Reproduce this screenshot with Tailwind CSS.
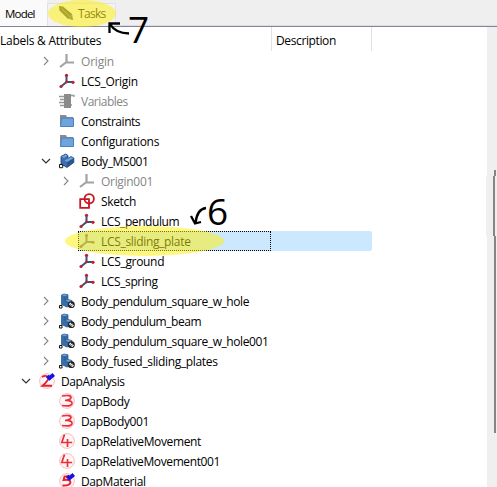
<!DOCTYPE html>
<html lang="en">
<head>
<meta charset="utf-8">
<title>Model tree</title>
<script src="https://cdn.jsdelivr.net/npm/@tailwindcss/browser@4"></script>
</head>
<body class="relative w-[497px] h-[487px] overflow-hidden bg-white font-['Open_Sans','Noto_Sans',sans-serif] text-[12px] leading-[20px] text-black whitespace-nowrap">
<svg class="hidden">
  <symbol id="lcs" viewBox="0 0 16 16"><path d="M7.500 2V9L2 13.500M7.500 9H14" fill="none" stroke="#35557f" stroke-width="2"/><g fill="#c4202b"><circle cx="7.500" cy="2.300" r="1.600"/><circle cx="2" cy="13.500" r="1.600"/><circle cx="14" cy="9.300" r="1.600"/><circle cx="7.600" cy="8.900" r="1.400"/></g></symbol>
  <symbol id="lcsdim" viewBox="0 0 16 16"><path d="M7.500 2V9L2 13.500M7.500 9H14" fill="none" stroke="#6f7a84" stroke-width="2"/><g fill="#8d6468"><circle cx="7.500" cy="2.300" r="1.500"/><circle cx="2" cy="13.500" r="1.500"/><circle cx="14" cy="9.300" r="1.500"/></g></symbol>
  <symbol id="origin" viewBox="0 0 16 16"><path d="M7.500 1V9L1 14M7.500 9.500H15" fill="none" stroke="#a2a2a2" stroke-width="2.200"/></symbol>
  <symbol id="vars" viewBox="0 0 16 16"><path d="M0 3.500H5M1 6.500H5M0 9.500H5M1 12.500H5M11 2.500H15V4M11 12H13" fill="none" stroke="#999" stroke-width="1.300"/><path d="M5 1H12V15H5Z" fill="#8b8b8b"/></symbol>
  <symbol id="folder" viewBox="0 0 16 16"><path d="M1 2H7L8 4H14V13H1Z" fill="#8c8c8c"/><path d="M2.500 5H14.500V13.500H1.500Z" fill="#6fa3dc" stroke="#4980c0"/></symbol>
  <symbol id="body" viewBox="0 0 16 16"><path d="M2 3.500L6.500 1L9 2.500V5.500L12 3.500L14.800 5V9.500L8 14.500L2 11Z" fill="#3a6eac" stroke="#1c3f6c" stroke-width=".8"/><path d="M8 9L14.600 5.200V9.400L8 14Z" fill="#28568f"/><path d="M2.500 3.700L6.500 1.500L8.600 2.800L5 5ZM5.500 7.500L12 4L14.400 5.200L8 9Z" fill="#6ea2da"/><path d="M.5 11.500H3.700V14.700H.5Z" fill="#fff" stroke="#111"/></symbol>
  <symbol id="link" viewBox="0 0 16 16"><path d="M2.500 2L5 1L9 1.800V6.500L13 7.500V13L8 14L2.500 11.500Z" fill="#396ca8" stroke="#24507f" stroke-width=".7"/><path d="M2.600 2.200L5 1.200L8.800 2L6 3.200ZM6 8L9 6.800L12.800 7.800L10 9.200Z" fill="#6b9fd6"/><path d="M6 3.500V8L9 9.300V13" fill="none" stroke="#24507f" stroke-width=".6"/><path d="M.5 12.500H3V15H.5Z" fill="#fff" stroke="#111"/><circle cx="12.400" cy="11.700" r="3.400" fill="#222"/><path d="M10.300 11.500L12 10M12.700 13.800L14.500 12M11.500 12.500L13.500 10.800" stroke="#fff" stroke-width="1.100"/></symbol>
  <symbol id="sketch" viewBox="0 0 16 16"><path d="M1.200 6.200H10V14.800H1.200Z" fill="none" stroke="#c81922" stroke-width="1.800"/><circle cx="10.200" cy="5.800" r="4.700" fill="none" stroke="#c81922" stroke-width="1.800"/></symbol>
  <symbol id="ring" viewBox="0 0 16 16"><circle cx="8" cy="8" r="7.400" fill="#fff5f5" stroke="#f7b5b8" stroke-width=".9"/></symbol>
  <symbol id="check" viewBox="0 0 16 16"><path d="M8.300 3L10.500 5.200L14.800 1.500" fill="none" stroke="#1212e8" stroke-width="3.800"/></symbol>
  <symbol id="d2" viewBox="0 0 16 16"><use href="#ring"/><path d="M3 4Q7 1.500 9.500 4.500Q10 7 3.500 12.800H13" fill="none" stroke="#e8202c" stroke-width="1.900"/><use href="#check"/></symbol>
  <symbol id="d3" viewBox="0 0 16 16"><use href="#ring"/><path d="M3 3Q12 1.500 12 4.500Q11.500 7.200 6 7.500Q13.500 7.200 13 10.500Q12.300 14 3 12.500" fill="none" stroke="#e8303b" stroke-width="1.700"/></symbol>
  <symbol id="d4" viewBox="0 0 16 16"><use href="#ring"/><path d="M5.500 1.500L2.800 9.500H13.200M8.500 6V14" fill="none" stroke="#e8303b" stroke-width="1.700"/></symbol>
  <symbol id="d5" viewBox="0 0 16 16"><use href="#ring"/><path d="M10 3L5.500 3.500L4.500 7Q11.500 6 11.500 9.500Q10.500 13 3.500 12.500" fill="none" stroke="#e8202c" stroke-width="1.900"/><use href="#check"/></symbol>
  <symbol id="right" viewBox="0 0 10 10"><path d="M3 1L7 5L3 9" fill="none" stroke="#858585" stroke-width="1.100"/></symbol>
  <symbol id="down" viewBox="0 0 10 10"><path d="M1 3L5 7L9 3" fill="none" stroke="#333" stroke-width="1.200"/></symbol>
</svg>

<header class="flex h-[27px] bg-[#efefef] border-b border-[#85839a]">
  <div class="w-[47px] bg-[#fafafa] pl-[5px] pt-[4px]"><span class="text-[11.5px] tracking-[-0.8px]">Model</span></div>
  <div class="mt-[3px] flex w-[69px] border border-b-0 border-[#e2e2e2] bg-[#f2f2f2] pl-[10px]">
    <svg class="mt-[1px] size-4" viewBox="0 0 16 16"><path d="M1 1L5 1.500L14 9L15 15L9.500 13.500L1.500 5.500Z" fill="#5c5c55"/><path d="M4 4L12 11.500M11 14L14 10" stroke="#a5a59c" stroke-width=".8"/></svg>
    <span class="ml-[4px] tracking-[-0.7px] text-[#222]">Tasks</span>
  </div>
  <div class="flex-1 border-b border-[#dedee2]"></div>
</header>

<div class="flex h-[460px]">
  <main class="w-[487px]">
    <div class="flex h-[24px] leading-[27px]">
      <div class="w-[272px] border-r border-[#e1e1e1]"><span class="tracking-[-0.26px]">Labels &amp; Attributes</span></div>
      <div class="w-[100px] border-r border-[#e1e1e1] pl-[4px]"><span class="tracking-[-0.38px]">Description</span></div>
    </div>
    <div class="[&>div]:flex [&>div]:h-[20px] [&>div]:items-center [&_svg]:shrink-0 [&_span]:pt-[2px]">
      <div class="pl-[41px] text-[#858585]"><svg class="mr-2 size-[10px]"><use href="#right"/></svg><svg class="mr-[6px] size-4"><use href="#origin"/></svg><span class="tracking-[-0.2px]">Origin</span></div>
      <div class="pl-[59px]"><svg class="mr-[6px] size-4"><use href="#lcs"/></svg><span class="tracking-[-0.3px]">LCS_Origin</span></div>
      <div class="pl-[59px] text-[#858585]"><svg class="mr-[6px] size-4"><use href="#vars"/></svg><span class="tracking-[-0.5px]">Variables</span></div>
      <div class="pl-[59px]"><svg class="mr-[6px] size-4"><use href="#folder"/></svg><span class="tracking-[-0.45px]">Constraints</span></div>
      <div class="pl-[59px]"><svg class="mr-[6px] size-4"><use href="#folder"/></svg><span class="tracking-[-0.3px]">Configurations</span></div>
      <div class="pl-[41px]"><svg class="mr-2 size-[10px]"><use href="#down"/></svg><svg class="mr-[6px] size-4"><use href="#body"/></svg><span class="tracking-[-0.4px]">Body_MS001</span></div>
      <div class="pl-[61px] text-[#858585]"><svg class="mr-2 size-[10px]"><use href="#right"/></svg><svg class="mr-[6px] size-4"><use href="#origin"/></svg><span class="tracking-[-0.3px]">Origin001</span></div>
      <div class="pl-[79px]"><svg class="mr-[6px] size-4"><use href="#sketch"/></svg><span class="tracking-[-0.35px]">Sketch</span></div>
      <div class="pl-[79px]"><svg class="mr-[6px] size-4"><use href="#lcs"/></svg><span class="tracking-[-0.43px]">LCS_pendulum</span></div>
      <div class="ml-[78px] w-[294px] rounded-[2px] bg-[#cce8ff]"><div class="flex h-[20px] w-[193px] items-center border border-dotted border-black"><svg class="mr-[6px] size-4"><use href="#lcsdim"/></svg><span class="tracking-[-0.32px]">LCS_sliding_plate</span></div></div>
      <div class="pl-[79px]"><svg class="mr-[6px] size-4"><use href="#lcs"/></svg><span class="tracking-[-0.32px]">LCS_ground</span></div>
      <div class="pl-[79px]"><svg class="mr-[6px] size-4"><use href="#lcs"/></svg><span class="tracking-[-0.4px]">LCS_spring</span></div>
      <div class="pl-[41px]"><svg class="mr-2 size-[10px]"><use href="#right"/></svg><svg class="mr-[6px] size-4"><use href="#link"/></svg><span class="tracking-[-0.42px]">Body_pendulum_square_w_hole</span></div>
      <div class="pl-[41px]"><svg class="mr-2 size-[10px]"><use href="#right"/></svg><svg class="mr-[6px] size-4"><use href="#link"/></svg><span class="tracking-[-0.46px]">Body_pendulum_beam</span></div>
      <div class="pl-[41px]"><svg class="mr-2 size-[10px]"><use href="#right"/></svg><svg class="mr-[6px] size-4"><use href="#link"/></svg><span class="tracking-[-0.42px]">Body_pendulum_square_w_hole001</span></div>
      <div class="pl-[41px]"><svg class="mr-2 size-[10px]"><use href="#right"/></svg><svg class="mr-[6px] size-4"><use href="#link"/></svg><span class="tracking-[-0.34px]">Body_fused_sliding_plates</span></div>
      <div class="pl-[21px]"><svg class="mr-2 size-[10px]"><use href="#down"/></svg><svg class="mr-[6px] size-4"><use href="#d2"/></svg><span class="tracking-[-0.38px]">DapAnalysis</span></div>
      <div class="pl-[59px]"><svg class="mr-[6px] size-4"><use href="#d3"/></svg><span class="tracking-[-0.4px]">DapBody</span></div>
      <div class="pl-[59px]"><svg class="mr-[6px] size-4"><use href="#d3"/></svg><span class="tracking-[-0.35px]">DapBody001</span></div>
      <div class="pl-[59px]"><svg class="mr-[6px] size-4"><use href="#d4"/></svg><span class="tracking-[-0.36px]">DapRelativeMovement</span></div>
      <div class="pl-[59px]"><svg class="mr-[6px] size-4"><use href="#d4"/></svg><span class="tracking-[-0.38px]">DapRelativeMovement001</span></div>
      <div class="pl-[59px]"><svg class="mr-[6px] size-4"><use href="#d5"/></svg><span class="tracking-[-0.38px]">DapMaterial</span></div>
    </div>
  </main>
  <aside class="w-[10px] bg-[#efefef] pt-[143px]">
    <div class="ml-[7px] h-[6px] w-[2px] bg-[#858585]"></div>
    <div class="-ml-px h-[60px] bg-[#efefef] pl-[7px]"><div class="h-full w-[2px] bg-[#858585]"></div></div>
    <div class="ml-[7px] h-[197px] w-[2px] bg-[#858585]"></div>
  </aside>
</div>

<!-- Highlighter and step annotations -->
<div class="absolute left-[48px] top-0 h-[27px] w-[68px] rounded-[50%] bg-[#fff000]/50"></div>
<div class="absolute left-[65px] top-[226px] h-[30px] w-[159px] rounded-[50%] bg-[#fff000]/50"></div>
<div class="absolute left-[128px] top-[9px] text-[37px] leading-[40px]">7</div>
<div class="absolute left-[207px] top-[191px] text-[37px] leading-[40px]">6</div>
<svg class="absolute left-[106px] top-[20px] h-[18px] w-[24px]" viewBox="0 0 24 18"><path d="M23 13.500Q9 13 4 4M3.500 13L3.500 3.500L14 3.500" fill="none" stroke="#000" stroke-width="2.300"/></svg>
<svg class="absolute left-[189px] top-[205px] h-[21px] w-[18px]" viewBox="0 0 18 21"><path d="M17 3Q8 4 6.500 18M2 11L6 18.500L12 17" fill="none" stroke="#000" stroke-width="2.300"/></svg>
</body>
</html>
